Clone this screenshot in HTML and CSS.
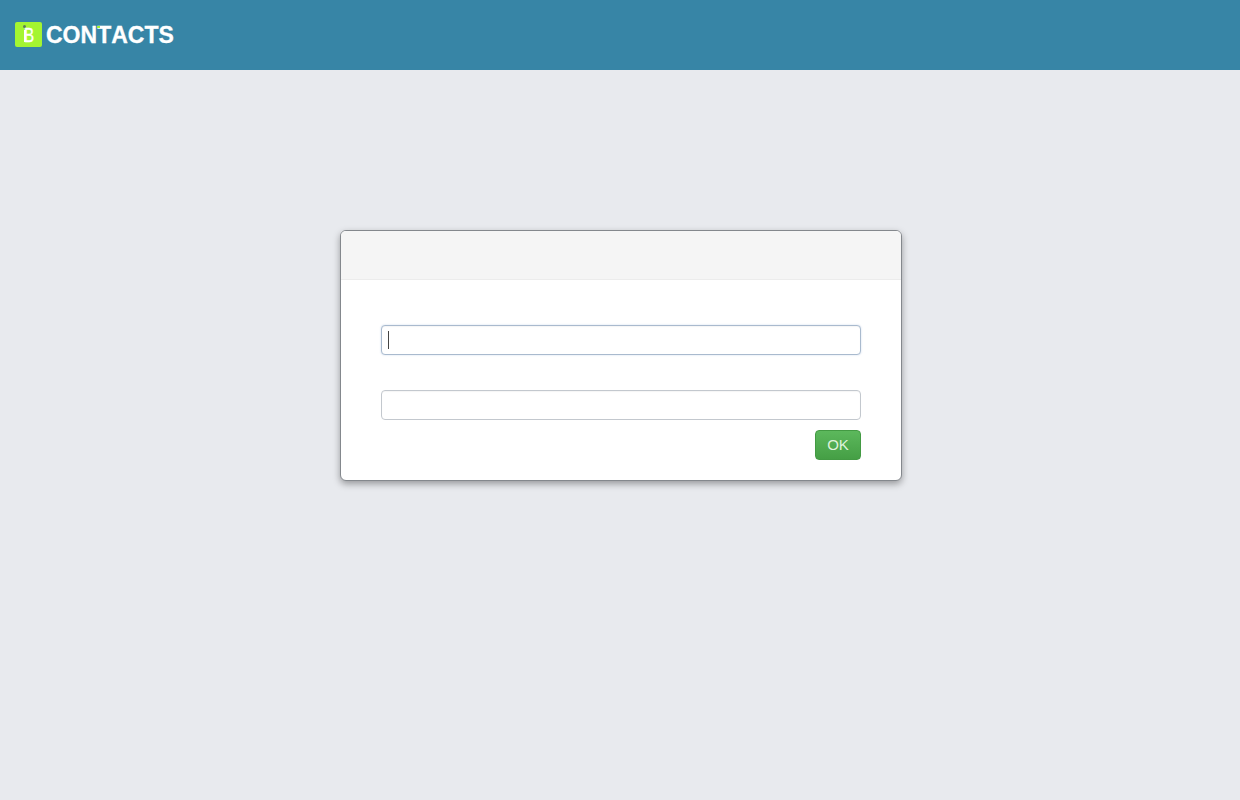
FILE: index.html
```html
<!DOCTYPE html>
<html lang="en">
<head>
<meta charset="utf-8">
<title>Contacts</title>
<link rel="stylesheet" href="styles.css">
</head>
<body>
<header class="topbar">
  <div class="logo">
    <span class="logo-mark"><span class="logo-dot"></span><span class="logo-stem"></span><span class="logo-b">B</span></span>
    <span class="logo-text">CON<span class="logo-t">T<span class="logo-tdot"></span></span>ACTS</span>
  </div>
</header>
<main class="stage">
  <section class="dialog">
    <div class="dialog-head"></div>
    <form class="dialog-body">
      <div class="field">
        <input class="input input-focus" type="text" aria-label="User">
        <span class="caret"></span>
      </div>
      <div class="field field-second">
        <input class="input" type="password" aria-label="Password">
      </div>
      <div class="actions">
        <button class="btn-ok" type="button">OK</button>
      </div>
    </form>
  </section>
</main>
</body>
</html>
```
FILE: styles.css
```css
* { box-sizing: border-box; }
html, body { margin: 0; height: 100%; }
body {
  background: #e8eaee;
  font-family: "Liberation Sans", Arial, sans-serif;
  overflow: hidden;
}
.topbar {
  height: 70px;
  background: #3785a6;
  display: flex;
  align-items: center;
  padding-left: 15px;
}
.logo { display: flex; align-items: center; gap: 4px; }
.logo-mark {
  position: relative;
  width: 27px;
  height: 25px;
  margin-top: -1px;
  background: #a4f531;
  border-radius: 2px;
  color: #fff;
  font-weight: 400;
  font-size: 21px;
  line-height: 25px;
  -webkit-text-stroke: 0.4px #fff;
}
.logo-b {
  position: absolute;
  left: 9px;
  top: 0;
  transform: scaleX(0.72);
  transform-origin: left center;
}
.logo-stem {
  position: absolute;
  left: 9px;
  top: 8px;
  width: 2px;
  height: 12px;
  background: #fff;
}
.logo-dot {
  position: absolute;
  left: 8px;
  top: 3px;
  width: 3px;
  height: 3px;
  border-radius: 50%;
  background: #5d7f55;
}
.logo-text {
  color: #fff;
  font-weight: 700;
  font-size: 23px;
  line-height: 28px;
  -webkit-text-stroke: 0.3px #fff;
}
.logo-t { position: relative; }
.logo-tdot {
  position: absolute;
  left: 0;
  top: 4px;
  width: 3px;
  height: 2px;
  background: #a4f531;
}
.stage { padding: 160px 0 0 340px; }
.dialog {
  width: 562px;
  height: 251px;
  background: #fff;
  border: 1px solid #84888d;
  border-radius: 6px;
  box-shadow: 0 3px 7px rgba(0, 0, 0, 0.35);
  overflow: hidden;
}
.dialog-head {
  height: 49px;
  background: #f5f5f5;
  border-bottom: 1px solid #ececec;
}
.dialog-body { padding: 45px 40px 20px; }
.field { position: relative; }
.field-second { margin-top: 35px; }
.input {
  display: block;
  width: 480px;
  height: 30px;
  padding: 4px 6px;
  background: #fff;
  border: 1px solid #c3c8ce;
  border-radius: 4px;
  outline: none;
  box-shadow: inset 0 1px 1px rgba(0, 0, 0, 0.04);
  font: 14px "Liberation Sans", Arial, sans-serif;
}
.input-focus {
  border-color: #a9bace;
  box-shadow: inset 0 1px 1px rgba(0, 0, 0, 0.04), 0 0 2px rgba(82, 130, 190, 0.3);
}
.caret {
  position: absolute;
  left: 7px;
  top: 6px;
  width: 1px;
  height: 18px;
  background: #444;
}
.actions { display: flex; justify-content: flex-end; margin-top: 10px; }
.btn-ok {
  width: 46px;
  height: 30px;
  padding: 0;
  color: #dff2dc;
  font: 15px/28px "Liberation Sans", Arial, sans-serif;
  background: linear-gradient(#5cb85c, #459f45);
  border: 1px solid #439a43;
  border-radius: 4px;
}
```
